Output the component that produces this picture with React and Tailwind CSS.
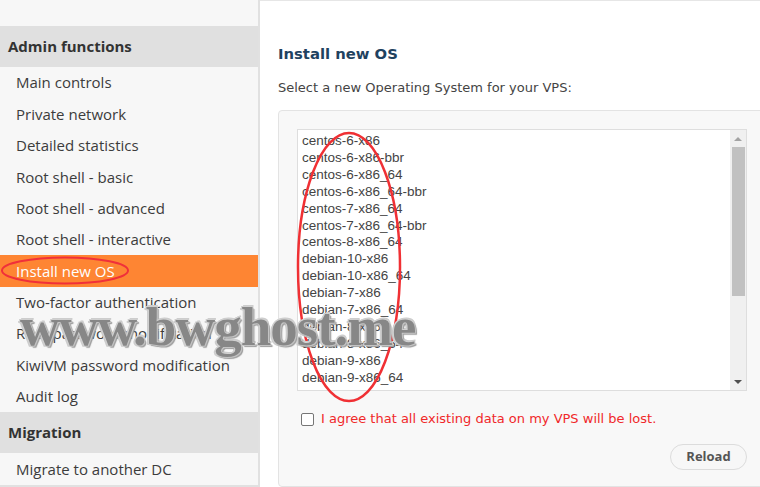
const adminItems = [
  "Main controls",
  "Private network",
  "Detailed statistics",
  "Root shell - basic",
  "Root shell - advanced",
  "Root shell - interactive",
  "Install new OS",
  "Two-factor authentication",
  "Root password modification",
  "KiwiVM password modification",
  "Audit log",
];

const osList = [
  "centos-6-x86",
  "centos-6-x86-bbr",
  "centos-6-x86_64",
  "centos-6-x86_64-bbr",
  "centos-7-x86_64",
  "centos-7-x86_64-bbr",
  "centos-8-x86_64",
  "debian-10-x86",
  "debian-10-x86_64",
  "debian-7-x86",
  "debian-7-x86_64",
  "debian-8-x86",
  "debian-8-x86_64",
  "debian-9-x86",
  "debian-9-x86_64",
  "debian-9-x86_64-bbr",
];

export default function App() {
  return (
    <div className="relative w-[760px] h-[487px] overflow-hidden flex bg-white font-['Open_Sans',sans-serif]">
      {/* sidebar */}
      <aside className="w-[260px] h-[487px] shrink-0 bg-[#f7f7f7] border-r-2 border-[#e1e1e1] pt-[26px]">
        <div className="border-b-2 border-[#e1e1e1]">
          <div className="h-[41px] bg-[#e0e0e0] pl-2 flex items-center text-[15px] font-bold text-[#333]">
            Admin functions
          </div>
          {adminItems.map((item) => (
            <div
              key={item}
              className={
                item === "Install new OS"
                  ? "h-[31.36px] pl-4 flex items-center text-[15px] text-white bg-[#fe8533]"
                  : "h-[31.36px] pl-4 flex items-center text-[15px] text-[#3c3c3c]"
              }
            >
              {item}
            </div>
          ))}
          <div className="h-[41px] bg-[#e0e0e0] pl-2 flex items-center text-[15px] font-bold text-[#333]">
            Migration
          </div>
          <div className="h-[32px] pl-4 flex items-center text-[15px] text-[#3c3c3c]">
            Migrate to another DC
          </div>
        </div>
      </aside>

      {/* main */}
      <main className="flex-1 border-t border-[#e6e6e6] pl-[18px] font-['DejaVu_Sans',sans-serif]">
        <h1 className="mt-[43px] h-[20px] leading-[20px] text-[14.8px] font-bold text-[#1f4260]">
          Install new OS
        </h1>
        <p className="mt-[14px] text-[13px] leading-[20px] text-[#444]">
          Select a new Operating System for your VPS:
        </p>
        <div className="mt-[12px] w-[500px] h-[377px] bg-[#f8f8f8] border border-[#e3e3e3] rounded-[4px] pt-[18px] pl-[18px]">
          <div className="w-[450px] h-[262px] bg-white border border-[#dedede] flex font-['Liberation_Sans',sans-serif]">
            <ul className="flex-1 pl-[4px] pt-[3px] overflow-hidden text-[13.5px] leading-[16.9px] text-[#444]">
              {osList.map((os) => (
                <li key={os}>{os}</li>
              ))}
            </ul>
            <div className="w-[16px] bg-[#f0f0f0] flex flex-col items-center">
              <div className="h-[17px] flex items-center justify-center">
                <div className="w-0 h-0 border-l-[4px] border-r-[4px] border-b-[4px] border-l-transparent border-r-transparent border-b-[#a3a3a3]" />
              </div>
              <div className="w-[13px] h-[149px] bg-[#c1c1c1]" />
              <div className="flex-1" />
              <div className="h-[17px] flex items-center justify-center">
                <div className="w-0 h-0 border-l-[4px] border-r-[4px] border-t-[4px] border-l-transparent border-r-transparent border-t-[#505050]" />
              </div>
            </div>
          </div>
          <label className="mt-[18px] h-[20px] flex items-center gap-[7px] pl-[4px]">
            <span className="w-[13px] h-[13px] bg-white border border-[#767676] rounded-[2px]" />
            <span className="text-[13px] text-[#f0282a]">
              I agree that all existing data on my VPS will be lost.
            </span>
          </label>
          <div className="w-[450px] flex justify-end mt-[15px]">
            <button className="w-[77px] h-[26px] rounded-[13px] border border-[#dcdcdc] bg-[#f7f7f7] text-[13px] font-bold text-[#555] font-['Open_Sans',sans-serif]">
              Reload
            </button>
          </div>
        </div>
      </main>

      {/* annotations */}
      <svg className="absolute left-0 top-0 pointer-events-none" width="760" height="487">
        <ellipse cx="65" cy="270.5" rx="63" ry="13" fill="none" stroke="#f0303a" strokeWidth="2" />
        <ellipse cx="349" cy="267" rx="51" ry="134" fill="none" stroke="#f03034" strokeWidth="2.5" />
      </svg>

      {/* watermark */}
      <div className="absolute left-[20px] top-[295px] text-[55px] leading-[64px] font-bold text-[#878787] font-['Liberation_Serif',serif] tracking-[-1px] [text-shadow:0_0_2px_#ddd,1px_1px_0_#bbb,-1px_-1px_0_#ccc,2px_2px_1px_#999,-2px_1px_0_#ccc,1px_-2px_0_#ccc]">
        www.bwghost.me
      </div>
    </div>
  );
}
